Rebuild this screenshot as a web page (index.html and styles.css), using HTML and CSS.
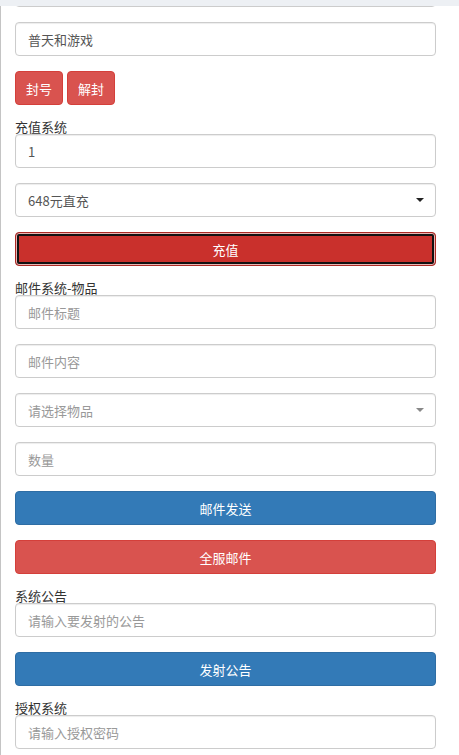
FILE: index.html
```html
<!DOCTYPE html>
<html lang="zh-CN">
<head>
  <meta charset="UTF-8">
  <meta name="viewport" content="width=device-width, initial-scale=1.0">
  <title>GM 后台</title>
  <link rel="stylesheet" href="styles.css">
</head>
<body>
  <div class="topbar"></div>
  <main class="panel">
    <input class="form-control" type="text" value="">
    <input class="form-control" type="text" value="普天和游戏">
    <div class="btn-row">
      <button class="btn btn-danger">封号</button>
      <button class="btn btn-danger">解封</button>
    </div>

    <label>充值系统</label>
    <input class="form-control" type="text" value="1">
    <div class="select-wrap">
      <select class="form-control">
        <option>648元直充</option>
      </select>
    </div>
    <button class="btn btn-block btn-danger focused">充值</button>

    <label>邮件系统-物品</label>
    <input class="form-control" type="text" placeholder="邮件标题">
    <input class="form-control" type="text" placeholder="邮件内容">
    <div class="select-wrap muted">
      <select class="form-control empty">
        <option>请选择物品</option>
      </select>
    </div>
    <input class="form-control" type="text" placeholder="数量">
    <button class="btn btn-block btn-primary">邮件发送</button>
    <button class="btn btn-block btn-danger">全服邮件</button>

    <label>系统公告</label>
    <input class="form-control" type="text" placeholder="请输入要发射的公告">
    <button class="btn btn-block btn-primary">发射公告</button>

    <label>授权系统</label>
    <input class="form-control" type="password" placeholder="请输入授权密码">
  </main>
</body>
</html>
```

FILE: styles.css
```css
:root {
  --danger: #d9534f;
  --danger-border: #d43f3a;
  --primary: #337ab7;
  --primary-border: #2e6da4;
  --input-border: #ccc;
}
* {
  box-sizing: border-box;
}
body {
  margin: 0;
  background: #fff;
  font-family: "Noto Sans CJK SC", "Noto Sans", sans-serif;
  font-size: 13px;
  color: #333;
  overflow: hidden;
}
.topbar {
  position: fixed;
  top: 0;
  left: 0;
  right: 0;
  height: 6px;
  background: #edf0f4;
  z-index: 2;
}
.panel {
  display: flex;
  flex-direction: column;
  margin-top: -27px;
  padding: 0 23px 0 14px;
  border-left: 1px solid #c4c4c4;
  min-height: 800px;
}
label {
  display: block;
  line-height: 14px;
  height: 14px;
  color: #333;
}
.form-control {
  display: block;
  width: 100%;
  height: 34px;
  margin: 0 0 15px;
  padding: 0 12px;
  font-family: inherit;
  font-size: 13px;
  color: #555;
  background: #fff;
  border: 1px solid var(--input-border);
  border-radius: 4px;
  box-shadow: inset 0 1px 1px rgba(0, 0, 0, .075);
  outline: none;
}
.form-control::placeholder {
  color: #999;
}
select.form-control {
  appearance: none;
  -webkit-appearance: none;
}
select.empty {
  color: #999;
}
.select-wrap {
  position: relative;
}
.select-wrap::after {
  content: "";
  position: absolute;
  right: 12px;
  top: 15px;
  border-left: 4px solid transparent;
  border-right: 4px solid transparent;
  border-top: 4px solid #222;
}
.select-wrap.muted::after {
  border-top-color: #888;
}
.btn-row {
  display: flex;
  gap: 4px;
  margin-bottom: 15px;
}
.btn {
  height: 34px;
  padding: 0 10px;
  font-family: inherit;
  font-size: 13px;
  color: #fff;
  border: 1px solid transparent;
  border-radius: 4px;
  cursor: pointer;
}
.btn-block {
  display: block;
  width: 100%;
  margin-bottom: 15px;
}
.btn-danger {
  background: var(--danger);
  border-color: var(--danger-border);
}
.btn-primary {
  background: var(--primary);
  border-color: var(--primary-border);
}
.btn-danger.focused {
  background: #c9302c;
  border-color: #ac2925;
  box-shadow: inset 0 0 0 1px #e9b3b1, inset 0 0 0 3px #111;
}
```
